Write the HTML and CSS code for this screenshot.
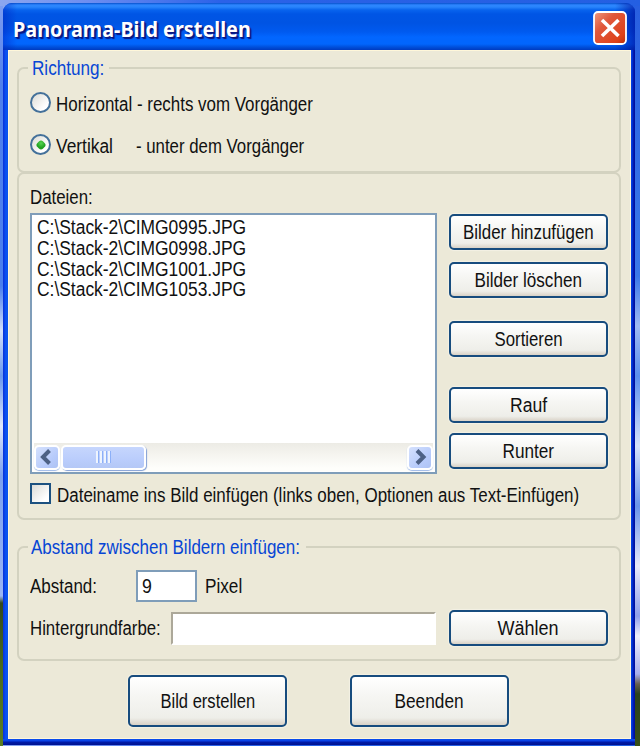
FILE: index.html
```
<!DOCTYPE html>
<html lang="de">
<head>
<meta charset="utf-8">
<title>Panorama-Bild erstellen</title>
<link rel="stylesheet" href="styles.css">
</head>
<body>
<div class="desk desk-left"></div><div class="desk desk-right"></div>
<main class="window">
  <header class="titlebar">
    <h1 data-w="238">Panorama-Bild erstellen</h1>
    <button class="close" aria-label="Schließen"><svg width="34" height="34" viewBox="0 0 34 34"><defs><linearGradient id="red" x1="0" y1="0" x2="1" y2="1"><stop offset="0" stop-color="#ee9a80"/><stop offset=".35" stop-color="#e0583c"/><stop offset=".8" stop-color="#de421a"/><stop offset="1" stop-color="#b92c06"/></linearGradient></defs><rect x="1" y="1" width="32" height="32" rx="4" fill="url(#red)" stroke="#fff" stroke-width="1.8"/><path d="M9 9 25.500 25M25.500 9 9 25" stroke="#fff" stroke-width="3.6"/></svg></button>
  </header>
  <section class="group direction">
    <h2 class="legend"><span data-w="72">Richtung:</span></h2>
    <label class="option"><i class="radio"></i><span data-w="257">Horizontal - rechts vom Vorgänger</span></label>
    <label class="option second"><i class="radio on"></i><span class="word"><span data-w="57">Vertikal</span></span><span data-w="168">- unter dem Vorgänger</span></label>
  </section>
  <section class="group files">
    <div class="caption"><span data-w="63">Dateien:</span></div>
    <div class="columns">
      <div class="listbox">
        <ul>
          <li><span data-w="209">C:\Stack-2\CIMG0995.JPG</span></li>
          <li><span data-w="209">C:\Stack-2\CIMG0998.JPG</span></li>
          <li><span data-w="209">C:\Stack-2\CIMG1001.JPG</span></li>
          <li><span data-w="209">C:\Stack-2\CIMG1053.JPG</span></li>
        </ul>
        <div class="scrollbar">
          <span class="arrow"><svg width="24" height="24" viewBox="0 0 24 24"><path d="M14.500 5.500 8 12l6.500 6.500" /></svg></span>
          <span class="thumb"><i></i><i></i><i></i><i></i></span>
          <span class="arrow end"><svg width="24" height="24" viewBox="0 0 24 24"><path d="M9 5.500 15.500 12 9 18.500" /></svg></span>
        </div>
      </div>
      <div class="actions">
        <button class="btn"><span data-w="131">Bilder hinzufügen</span></button>
        <button class="btn g12"><span data-w="107">Bilder löschen</span></button>
        <button class="btn g23"><span data-w="68">Sortieren</span></button>
        <button class="btn g30"><span data-w="37">Rauf</span></button>
        <button class="btn g10"><span data-w="52">Runter</span></button>
      </div>
    </div>
    <label class="option check"><i class="checkbox"></i><span data-w="522">Dateiname ins Bild einfügen (links oben, Optionen aus Text-Einfügen)</span></label>
  </section>
  <section class="group spacing">
    <h2 class="legend wide"><span data-w="269">Abstand zwischen Bildern einfügen:</span></h2>
    <div class="row distance"><div class="name"><span data-w="67">Abstand:</span></div><div class="number"><span data-w="10">9</span></div><span data-w="37">Pixel</span></div>
    <div class="row color"><div class="name"><span data-w="131">Hintergrundfarbe:</span></div><div class="swatch"></div><button class="btn"><span data-w="61">Wählen</span></button></div>
  </section>
  <footer class="footer">
    <button class="btn tall"><span data-w="95">Bild erstellen</span></button>
    <button class="btn tall"><span data-w="69">Beenden</span></button>
  </footer>
</main>
<script src="fit.js"></script>
</body>
</html>
```
FILE: fit.js
```
// Condense each label to its nominal width.
document.querySelectorAll('[data-w]').forEach(function (el) {
  el.style.transform = 'scaleX(' + (el.dataset.w / el.offsetWidth) + ')';
});
```
FILE: styles.css
```
*, *::before, *::after { box-sizing: border-box; }
body { margin: 0; width: 640px; height: 746px; overflow: hidden; padding: 3px 5px 1px 3px;
  background: linear-gradient(90deg, #8ba6ef 0, #6d8df0 90px, #2b62e8 220px, #245fe2 100%);
  font: 19.5px/22px "Liberation Sans", Arial, sans-serif; color: #111; }
h1, h2, ul { margin: 0; padding: 0; font-weight: normal; }
[data-w] { display: block; flex: none; width: max-content; white-space: nowrap; transform-origin: 0 50%; }
.desk { position: absolute; top: 6px; bottom: 0; }
.desk-left { left: 0; width: 3px; background: linear-gradient(#7d9cf0 0, #4f80ec 80px, #4a7fee 280px, #d4e0fa 325px, #6a98ee 370px, #e0e8fb 420px, #7ba0ef 470px, #9bb5f4 590px, #34491f 597px, #4b6a1c 660px, #5c7e22 100%); }
.desk-right { right: 0; width: 5px; background: linear-gradient(#285fe0 0, #3b79e9 270px, #9fbaf3 320px, #5b8fee 370px, #d6e2fb 440px, #6a94ea 500px, #e7e9fa 560px, #8f9feb 610px, #eeeffb 630px, #a8aeec 668px, #665f50 678px, #2b421a 688px, #385019 100%); }
.window { position: relative; isolation: isolate; width: 632px; height: 742px; border-radius: 9px 9px 0 0; overflow: hidden;
  background: linear-gradient(90deg, #0831d9 0, #0a53f2 3px, #0752ec 5px, #0752ec 627px, #0037dc 629px, #0010a0 631px); }
.window::before { content: ""; position: absolute; z-index: 0; left: 5px; top: 47px; width: 623px; bottom: 6px; background: #ece9d8; border: 1px solid #fff7da; }
.window::after { content: ""; position: absolute; left: 0; right: 0; bottom: 0; height: 6px; background: linear-gradient(#0b50ee 0, #0940e6 2px, #001baa 3px, #00128f 6px); }
.titlebar { height: 47px; padding: 0 8px 0 10px; display: flex; align-items: center; justify-content: space-between;
  background: linear-gradient(90deg, rgba(0,30,190,.45) 0, rgba(0,30,190,0) 14px, rgba(0,30,190,0) 612px, rgba(0,20,160,.7) 100%), linear-gradient(#0751cc 0, #2d86ff 2px, #2884fb 4px, #0863ee 7px, #0055e5 11px, #0054e3 20px, #005af0 29px, #0266ff 34px, #0266fd 41px, #0050dc 44px, #003bc0 47px); }
h1 { font: bold 21px/26px "Noto Sans", sans-serif; color: #fff; text-shadow: 1px 1px 1px #0a1883, 2px 2px 1px #0a1883; margin-top: 4px; }
.close { padding: 0; border: 0; background: none; height: 34px; margin-top: 3px; }
.close svg { display: block; }
.group { position: relative; width: 604px; margin-left: 14px; border: 2px solid #d3d2c0; border-radius: 7px; z-index: 1; }
.direction { height: 106px; margin-top: 17px; padding: 23px 0 0 11px; }
.files { height: 348px; margin-top: -1px; padding: 12px 0 0 11px; }
.spacing { height: 115px; margin-top: 26px; padding: 22px 0 0 11px; }
.legend { position: absolute; left: 9px; top: -12px; width: 81px; padding-left: 4px; background: #ece9d8; font-size: 19.5px; line-height: 22px; color: #0746d5; }
.legend.wide { width: 278px; padding-left: 3px; }
.option { display: flex; align-items: center; height: 21px; }
.option > span { position: relative; top: 1px; }
.option.second { margin-top: 21px; }
.word { width: 80px; }
.radio { width: 21px; height: 21px; margin-right: 5px; flex: none; border: 2px solid #44719a; border-radius: 50%; background: linear-gradient(135deg, #dcdcd5, #fff 75%); display: grid; place-items: center; }
.radio.on::before { content: ""; width: 8px; height: 8px; border-radius: 3px; transform: rotate(45deg); background: radial-gradient(circle at 35% 35%, #55d551, #21a121 60%); }
.checkbox { width: 21px; height: 21px; margin-right: 6px; flex: none; border: 2px solid #1c5180; background: linear-gradient(135deg, #dcdcd7, #fff 80%); }
.caption { height: 27px; }
.columns { display: flex; gap: 12px; align-items: flex-start; }
.listbox { width: 407px; height: 261px; border: 2px solid #7f9db9; background: #fff; padding: 2px 2px 1px 2px; display: flex; flex-direction: column; justify-content: space-between; }
.listbox ul { list-style: none; padding-left: 3px; }
.listbox li { height: 20.8px; line-height: 21px; }
.scrollbar { height: 28px; display: flex; align-items: center; background: linear-gradient(#ecebe5 0, #f5f4ef 40%, #fefefb 90%); }
.arrow, .thumb { height: 25px; border: 2px solid #fff; border-radius: 5px; background: linear-gradient(135deg, #d5e1fd, #b7cbfb 65%, #adc2f3); box-shadow: 0 1px 1px #9db8e8; display: flex; align-items: center; justify-content: center; }
.arrow { width: 26px; flex: none; }
.arrow path { fill: none; stroke: #4d6185; stroke-width: 4; }
.arrow svg { flex: none; }
.thumb { width: 85px; margin-left: 1px; gap: 1px; background: linear-gradient(#c6d6fd, #bacdfc 60%, #b4c8f6); box-shadow: 1px 1px 1px #829fd5; }
.thumb i { width: 3px; height: 12px; background: #eef4fe; border-right: 1px solid #8cb0f8; }
.end { margin-left: auto; }
.actions { padding-top: 1px; display: flex; flex-direction: column; }
.btn { width: 159px; height: 36px; padding: 0; border: 2px solid #174c7e; border-radius: 5px; background: linear-gradient(#fff 0, #f6f6f3 40%, #eeeee9 85%, #d9d2c7 100%); box-shadow: 0 0 1px 1px #f4f1e5; font: inherit; color: inherit; display: flex; align-items: center; justify-content: center; }
.btn [data-w] { transform-origin: 50% 50%; }
.g12 { margin-top: 12px; }
.g23 { margin-top: 23px; }
.g30 { margin-top: 30px; }
.g10 { margin-top: 10px; }
.check { margin-top: 9px; }
.row { display: flex; align-items: center; }
.distance { height: 32px; }
.distance .name { width: 106px; }
.number { width: 61px; height: 32px; margin-right: 8px; border: 2px solid #7f9db9; background: #fff; padding: 3px 0 0 4px; }
.color { height: 36px; margin-top: 8px; }
.color .name { width: 141px; }
.swatch { width: 265px; height: 33px; margin-right: 13px; background: #fff; border: 2px solid; border-color: #aca899 #fff #fff #aca899; }
.footer { position: relative; z-index: 1; display: flex; gap: 63px; padding: 14px 0 0 125px; }
.tall { height: 52px; }
```
